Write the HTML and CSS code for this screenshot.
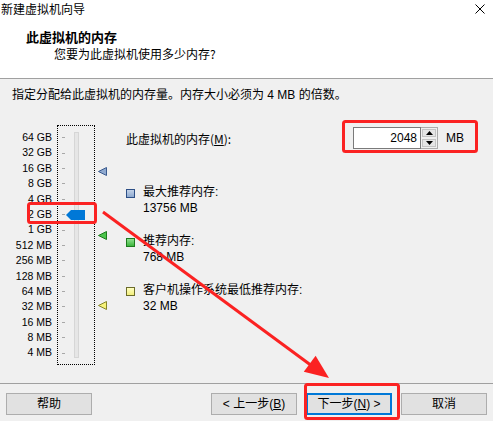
FILE: index.html
```html
<!DOCTYPE html>
<html>
<head>
    <meta charset="utf-8">
    <title>新建虚拟机向导</title>
    <link rel="stylesheet" href="styles.css">
</head>
<body>
<div class="window">
    <div class="titlebar">
        <span class="title">新建虚拟机向导</span>
        <svg class="close" width="10" height="10" viewBox="0 0 10 10">
            <path d="M0.5 0.5L9.5 9.5M9.5 0.5L0.5 9.5" stroke="#000" stroke-width="1"/>
        </svg>
    </div>

    <div class="header">
        <div class="heading">此虚拟机的内存</div>
        <div class="subheading">您要为此虚拟机使用多少内存?</div>
    </div>

    <div class="content">
        <p class="intro">指定分配给此虚拟机的内存量。内存大小必须为 4 MB 的倍数。</p>
        <div class="main">
            <div class="scale-labels">
                <span>64 GB</span><span>32 GB</span><span>16 GB</span><span>8 GB</span><span>4 GB</span>
                <span>2 GB</span><span>1 GB</span><span>512 MB</span><span>256 MB</span><span>128 MB</span>
                <span>64 MB</span><span>32 MB</span><span>16 MB</span><span>8 MB</span><span>4 MB</span>
            </div>
            <div class="slider">
                <div class="ticks">
                    <span></span><span></span><span></span><span></span><span></span>
                    <span></span><span></span><span></span><span></span><span></span>
                    <span></span><span></span><span></span><span></span><span></span>
                </div>
                <div class="track"></div>
                <svg class="thumb" width="19" height="10" viewBox="0 0 19 10">
                    <polygon points="0,5 5,0 19,0 19,10 5,10" fill="#0078d7"/>
                </svg>
            </div>
            <div class="markers">
                <svg class="marker marker-max" width="9" height="9" viewBox="0 0 9 9">
                    <polygon points="0.5,4.5 8.5,0.5 8.5,8.5" fill="#8fa9cf" stroke="#3a5a8e"/>
                </svg>
                <svg class="marker marker-rec" width="9" height="9" viewBox="0 0 9 9">
                    <polygon points="0.5,4.5 8.5,0.5 8.5,8.5" fill="#4cc44c" stroke="#1c7a1c"/>
                </svg>
                <svg class="marker marker-min" width="9" height="9" viewBox="0 0 9 9">
                    <polygon points="0.5,4.5 8.5,0.5 8.5,8.5" fill="#f6f27a" stroke="#85852a"/>
                </svg>
            </div>
            <div class="settings">
                <div class="mem-row">
                    <span class="mem-label">此虚拟机的内存(<u>M</u>):</span>
                    <div class="spin">
                        <div class="spin-value">2048</div>
                        <div class="spin-btns">
                            <span class="spin-btn"><svg width="7" height="4" viewBox="0 0 7 4"><polygon points="3.5,0 7,4 0,4" fill="#000"/></svg></span>
                            <span class="spin-btn"><svg width="7" height="4" viewBox="0 0 7 4"><polygon points="0,0 7,0 3.5,4" fill="#000"/></svg></span>
                        </div>
                    </div>
                    <span class="unit">MB</span>
                </div>
                <div class="legend">
                    <div class="legend-item">
                        <i class="swatch swatch-max"></i>
                        <div>
                            <div>最大推荐内存:</div>
                            <div>13756 MB</div>
                        </div>
                    </div>
                    <div class="legend-item">
                        <i class="swatch swatch-rec"></i>
                        <div>
                            <div>推荐内存:</div>
                            <div>768 MB</div>
                        </div>
                    </div>
                    <div class="legend-item">
                        <i class="swatch swatch-min"></i>
                        <div>
                            <div>客户机操作系统最低推荐内存:</div>
                            <div>32 MB</div>
                        </div>
                    </div>
                </div>
            </div>
        </div>
    </div>

    <div class="footer">
        <button class="btn">帮助</button>
        <div class="nav">
            <button class="btn">&lt; 上一步(<u>B</u>)</button>
            <button class="btn btn-default">下一步(<u>N</u>) &gt;</button>
            <button class="btn">取消</button>
        </div>
    </div>

    <!-- red annotation marks drawn over the dialog -->
    <svg class="annotations" width="493" height="421" viewBox="0 0 493 421">
        <g fill="none" stroke="#fb2222" stroke-width="3">
            <rect x="28.5" y="203.5" width="67" height="19" rx="2"/>
            <rect x="343.5" y="121.5" width="133" height="30" rx="2"/>
            <rect x="305.5" y="384.5" width="93" height="34" rx="2"/>
            <line x1="103" y1="212" x2="312" y2="366"/>
        </g>
        <polygon points="329,378 303.8,371.8 315.6,355.7" fill="#fb2222"/>
    </svg>
</div>
</body>
</html>
```

FILE: styles.css
```css
body {
    margin: 0;
    background-color: #f0f0f0;
    font-family: "Liberation Sans", "Noto Sans CJK SC", sans-serif;
    font-size: 12px;
    color: #000;
}

.window {
    position: relative;
    width: 493px;
    height: 421px;
    display: flex;
    flex-direction: column;
    overflow: hidden;
}

.titlebar {
    height: 18px;
    display: flex;
    align-items: center;
    justify-content: space-between;
    padding: 0 8px 0 1px;
    background-color: #ffffff;
    line-height: 18px;
    font-family: "Noto Sans CJK SC", sans-serif;
}

.header {
    height: 48px;
    padding: 12px 0 0 26px;
    background-color: #ffffff;
    border-bottom: 1px solid #a0a0a0;
    font-family: "Noto Sans CJK SC", sans-serif;
}

.heading {
    font-size: 13px;
    font-weight: bold;
    line-height: 14px;
    height: 14px;
}

.subheading {
    margin: 2px 0 0 28px;
    line-height: 16px;
}

.content {
    flex: 1;
}

.intro {
    margin: 8px 0 0 12px;
    line-height: 16px;
}

.main {
    display: flex;
    margin-top: 22px;
}

.scale-labels {
    width: 52px;
    padding-top: 5px;
    text-align: right;
    font-size: 10.5px;
}

.scale-labels span {
    display: block;
    height: 15.4px;
    line-height: 15.4px;
}

.slider {
    position: relative;
    display: flex;
    box-sizing: border-box;
    width: 38px;
    height: 240px;
    margin-left: 5px;
    border: 1px dotted #000;
}

.ticks {
    margin-left: 4px;
    padding-top: 4px;
}

.ticks span {
    display: flex;
    align-items: center;
    height: 15.4px;
}

.ticks span::before {
    content: "";
    width: 3px;
    height: 1px;
    background-color: #a8a8a8;
}

.track {
    box-sizing: border-box;
    width: 5px;
    height: 226px;
    margin: 6px 0 0 9px;
    background-color: #e6e6e6;
    border: 1px solid #d6d6d6;
}

.thumb {
    position: absolute;
    left: 8px;
    top: 84px;
}

.markers {
    position: relative;
    width: 9px;
    margin-left: 3px;
}

.marker {
    position: absolute;
    left: 0;
}

.marker-max { top: 42px; }
.marker-rec { top: 106px; }
.marker-min { top: 176px; }

.settings {
    flex: 1;
    margin-left: 19px;
    padding: 2px 29px 0 0;
}

.mem-row {
    display: flex;
    align-items: center;
    height: 22px;
}

.mem-label {
    font-family: "Noto Sans CJK SC", sans-serif;
}

.spin {
    display: flex;
    margin-left: auto;
    height: 22px;
}

.spin-value {
    box-sizing: border-box;
    width: 68px;
    height: 22px;
    padding-right: 3px;
    border: 1px solid #7a7a7a;
    background-color: #ffffff;
    text-align: right;
    line-height: 20px;
}

.spin-btns {
    display: flex;
    flex-direction: column;
    box-sizing: border-box;
    width: 17px;
    border: 1px solid #acacac;
    border-left: none;
    background-color: #f0f0f0;
}

.spin-btn {
    flex: 1;
    display: flex;
    align-items: center;
    justify-content: center;
    margin: 1px;
    background-color: #e5e5e5;
    border: 1px solid #c4c4c4;
}

.unit {
    margin-left: 8px;
}

.legend {
    margin-top: 36px;
}

.legend-item {
    display: flex;
    align-items: flex-start;
    line-height: 15.5px;
    margin-bottom: 18px;
}

.swatch {
    box-sizing: border-box;
    width: 9px;
    height: 9px;
    margin: 4px 8px 0 0;
    border: 1px solid;
}

.swatch-max {
    background: linear-gradient(#c2d2e8, #8ea9cf);
    border-color: #2d4f86;
}

.swatch-rec {
    background: linear-gradient(#8fe08f, #3cb53c);
    border-color: #1d7a1d;
}

.swatch-min {
    background: linear-gradient(#ffffc0, #f2ee7c);
    border-color: #6b6b2a;
}

.footer {
    display: flex;
    box-sizing: border-box;
    height: 38px;
    padding: 9px 6px 0 6px;
    border-top: 1px solid #a0a0a0;
}

.nav {
    display: flex;
    gap: 9px;
    margin-left: auto;
}

.btn {
    box-sizing: border-box;
    width: 86px;
    height: 22px;
    padding: 0;
    border: 1px solid #adadad;
    background-color: #e1e1e1;
    font-family: "Liberation Sans", "Noto Sans CJK SC", sans-serif;
    font-size: 12px;
    color: #000;
    line-height: 20px;
}

.btn-default {
    border: 2px solid #0078d7;
    line-height: 18px;
}

.annotations {
    position: absolute;
    left: 0;
    top: 0;
    pointer-events: none;
}
```
